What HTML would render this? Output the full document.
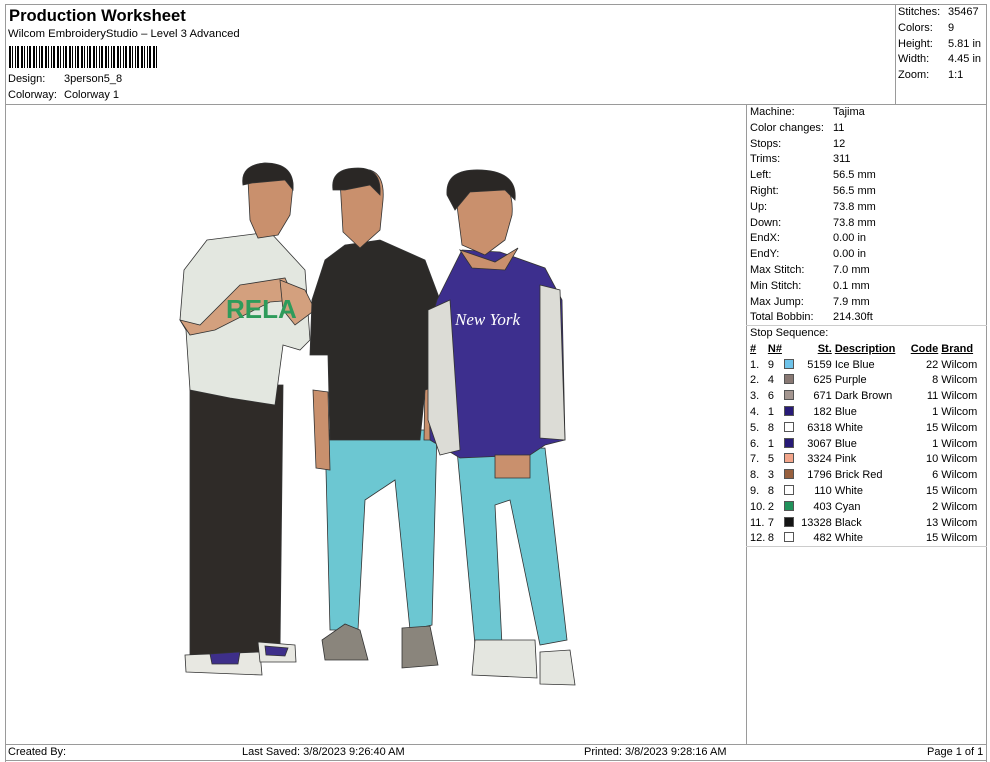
<!DOCTYPE html>
<html><head><meta charset="utf-8"><style>
*{margin:0;padding:0;box-sizing:border-box}
body{width:990px;height:762px;background:#fff;font-family:"Liberation Sans",Arial,sans-serif;font-size:11px;color:#000;position:relative;overflow:hidden}
.a{position:absolute;white-space:nowrap}
.ln{position:absolute;background:#9a9a9a}
.sw{display:inline-block;width:10px;height:10px;border:1px solid #555;vertical-align:-1px}
table{border-collapse:collapse;font-size:11px}
td{padding:0;height:15.8px;white-space:nowrap}
u{text-decoration:underline}
</style></head><body>
<div class="ln" style="left:5px;top:4px;width:982px;height:1px"></div>
<div class="ln" style="left:5px;top:4px;width:1px;height:758px"></div>
<div class="ln" style="left:986px;top:4px;width:1px;height:758px"></div>
<div class="ln" style="left:5px;top:104px;width:982px;height:1px"></div>
<div class="ln" style="left:895px;top:4px;width:1px;height:100px"></div>
<div class="ln" style="left:746px;top:104px;width:1px;height:640px"></div>
<div class="ln" style="left:5px;top:744px;width:982px;height:1px"></div>
<div class="ln" style="left:5px;top:760px;width:982px;height:1px"></div>
<div class="ln" style="left:746px;top:325px;width:241px;height:1px;background:#ccc"></div>
<div class="ln" style="left:746px;top:546px;width:241px;height:1px;background:#ccc"></div>

<div class="a" style="left:9px;top:6px;font-size:16.6px;font-weight:bold">Production Worksheet</div>
<div class="a" style="left:8px;top:28px;font-size:11.3px">Wilcom EmbroideryStudio – Level 3 Advanced</div>
<div class="a" style="left:9px;top:46px;width:148px;height:22px;background:repeating-linear-gradient(90deg,#000 0 2px,#fff 2px 3px,#000 3px 4px,#fff 4px 6px,#000 6px 7px,#fff 7px 8px,#000 8px 10px,#fff 10px 12px)"></div>
<div class="a" style="left:8px;top:73px">Design:</div><div class="a" style="left:64px;top:73px">3person5_8</div>
<div class="a" style="left:8px;top:89px">Colorway:</div><div class="a" style="left:64px;top:89px">Colorway 1</div>

<div class="a" style="left:898px;top:5px;line-height:15.8px">Stitches:<br>Colors:<br>Height:<br>Width:<br>Zoom:</div>
<div class="a" style="left:948px;top:5px;line-height:15.8px">35467<br>9<br>5.81 in<br>4.45 in<br>1:1</div>

<div class="a" style="left:750px;top:105px;line-height:15.8px">Machine:<br>Color changes:<br>Stops:<br>Trims:<br>Left:<br>Right:<br>Up:<br>Down:<br>EndX:<br>EndY:<br>Max Stitch:<br>Min Stitch:<br>Max Jump:<br>Total Bobbin:<br>Stop Sequence:</div>
<div class="a" style="left:833px;top:105px;line-height:15.8px">Tajima<br>11<br>12<br>311<br>56.5 mm<br>56.5 mm<br>73.8 mm<br>73.8 mm<br>0.00 in<br>0.00 in<br>7.0 mm<br>0.1 mm<br>7.9 mm<br>214.30ft</div>

<table class="a" style="left:750px;top:341px;width:234px">
<tr style="font-weight:bold"><td><u>#</u></td><td><u>N#</u></td><td></td><td style="text-align:right"><u>St.</u></td><td>&nbsp;<u>Description</u></td><td style="text-align:right"><u>Code</u></td><td>&nbsp;<u>Brand</u></td></tr>
<tr><td>1.</td><td>9</td><td><span class="sw" style="background:#6ec3ea"></span></td><td style="text-align:right">5159</td><td>&nbsp;Ice Blue</td><td style="text-align:right">22</td><td>&nbsp;Wilcom</td></tr>
<tr><td>2.</td><td>4</td><td><span class="sw" style="background:#887873"></span></td><td style="text-align:right">625</td><td>&nbsp;Purple</td><td style="text-align:right">8</td><td>&nbsp;Wilcom</td></tr>
<tr><td>3.</td><td>6</td><td><span class="sw" style="background:#a49690"></span></td><td style="text-align:right">671</td><td>&nbsp;Dark Brown</td><td style="text-align:right">11</td><td>&nbsp;Wilcom</td></tr>
<tr><td>4.</td><td>1</td><td><span class="sw" style="background:#271a77"></span></td><td style="text-align:right">182</td><td>&nbsp;Blue</td><td style="text-align:right">1</td><td>&nbsp;Wilcom</td></tr>
<tr><td>5.</td><td>8</td><td><span class="sw" style="background:#fff"></span></td><td style="text-align:right">6318</td><td>&nbsp;White</td><td style="text-align:right">15</td><td>&nbsp;Wilcom</td></tr>
<tr><td>6.</td><td>1</td><td><span class="sw" style="background:#271a77"></span></td><td style="text-align:right">3067</td><td>&nbsp;Blue</td><td style="text-align:right">1</td><td>&nbsp;Wilcom</td></tr>
<tr><td>7.</td><td>5</td><td><span class="sw" style="background:#f2a58a"></span></td><td style="text-align:right">3324</td><td>&nbsp;Pink</td><td style="text-align:right">10</td><td>&nbsp;Wilcom</td></tr>
<tr><td>8.</td><td>3</td><td><span class="sw" style="background:#98603e"></span></td><td style="text-align:right">1796</td><td>&nbsp;Brick Red</td><td style="text-align:right">6</td><td>&nbsp;Wilcom</td></tr>
<tr><td>9.</td><td>8</td><td><span class="sw" style="background:#fff"></span></td><td style="text-align:right">110</td><td>&nbsp;White</td><td style="text-align:right">15</td><td>&nbsp;Wilcom</td></tr>
<tr><td>10.</td><td>2</td><td><span class="sw" style="background:#21925b"></span></td><td style="text-align:right">403</td><td>&nbsp;Cyan</td><td style="text-align:right">2</td><td>&nbsp;Wilcom</td></tr>
<tr><td>11.</td><td>7</td><td><span class="sw" style="background:#141414"></span></td><td style="text-align:right">13328</td><td>&nbsp;Black</td><td style="text-align:right">13</td><td>&nbsp;Wilcom</td></tr>
<tr><td>12.</td><td>8</td><td><span class="sw" style="background:#fff"></span></td><td style="text-align:right">482</td><td>&nbsp;White</td><td style="text-align:right">15</td><td>&nbsp;Wilcom</td></tr>
</table>

<div class="a" style="left:8px;top:746px">Created By:</div>
<div class="a" style="left:242px;top:746px">Last Saved: 3/8/2023 9:26:40 AM</div>
<div class="a" style="left:584px;top:746px">Printed: 3/8/2023 9:28:16 AM</div>
<div class="a" style="left:927px;top:746px">Page 1 of 1</div>

<svg class="a" style="left:0;top:0" width="746" height="744" viewBox="0 0 746 744">
<g stroke="#333" stroke-width="0.8">
<path d="M190 385 L283 385 L280 650 L240 655 L190 660 Z" fill="#2f2b28"/>
<path d="M185 655 L260 652 L262 675 L186 672 Z" fill="#e8e8e2"/>
<path d="M210 654 L240 652 L238 664 L212 664Z" fill="#3e2f8a"/>
<path d="M258 642 L295 645 L296 662 L260 662 Z" fill="#e8e8e2"/>
<path d="M265 646 L288 648 L285 656 L266 655Z" fill="#3e2f8a"/>
<path d="M207 240 L270 232 L305 270 L310 340 L300 350 L283 345 L275 405 L230 398 L190 390 L186 330 L180 320 L184 270 Z" fill="#e3e7e0"/>
<path d="M180 320 L200 325 L240 285 L285 278 L295 300 L270 302 L215 330 L190 335 Z" fill="#d3a07e"/>
<path d="M280 280 L305 290 L315 310 L295 325 L283 310 Z" fill="#d3a07e"/>
<path d="M248 180 Q243 165 265 163 Q292 165 293 185 L290 215 L278 235 L258 238 L250 220 Z" fill="#c9906d"/>
<path d="M243 185 Q240 165 265 163 Q295 163 293 190 L285 180 L252 183 Z" fill="#2a2725"/>
<text x="226" y="318" font-family="Liberation Sans" font-weight="bold" font-size="26" fill="#2e9b5b" stroke="none">RELA</text>
<path d="M325 430 L437 430 L432 625 L410 630 L395 480 L365 500 L358 630 L330 630 Z" fill="#6cc7d2"/>
<path d="M322 640 L345 624 L360 630 L368 660 L325 660 Z" fill="#8a857c"/>
<path d="M402 628 L430 626 L438 665 L402 668 Z" fill="#8a857c"/>
<path d="M313 390 L328 392 L330 470 L316 468 Z" fill="#c9906d"/>
<path d="M425 380 L440 382 L438 440 L424 440 Z" fill="#c9906d"/>
<path d="M345 245 L380 240 L425 260 L440 300 L440 385 L425 390 L420 440 L330 440 L328 355 L310 355 L312 300 L325 260 Z" fill="#2c2a28"/>
<path d="M340 180 Q345 168 370 170 Q385 175 383 200 L380 230 L360 248 L343 232 Z" fill="#c9906d"/>
<path d="M333 190 Q330 168 358 168 Q382 168 380 195 L370 185 L345 190 Z" fill="#2a2725"/>
<path d="M457 450 L545 448 L567 640 L540 645 L510 500 L495 505 L502 645 L475 645 Z" fill="#6cc7d2"/>
<path d="M475 640 L535 640 L537 678 L472 675 Z" fill="#e4e6e0"/>
<path d="M540 652 L570 650 L575 685 L540 684 Z" fill="#e4e6e0"/>
<path d="M437 300 L462 250 L500 252 L545 268 L562 300 L565 440 L545 445 L530 455 L460 458 L430 440 L428 330 Z" fill="#3d2f8e"/>
<path d="M428 310 L450 300 L460 450 L440 455 L428 420 Z" fill="#dcdcd6"/>
<path d="M540 285 L560 290 L565 440 L540 438 Z" fill="#dcdcd6"/>
<path d="M460 250 L495 262 L518 248 L505 270 L472 268 Z" fill="#c9906d"/>
<path d="M455 190 Q455 175 485 175 Q515 180 512 215 L505 240 L485 255 L462 245 Z" fill="#c9906d"/>
<path d="M447 195 Q445 168 482 170 Q518 172 515 200 L505 190 L470 192 L455 210 Z" fill="#2a2725"/>
<path d="M495 455 L530 455 L530 478 L495 478Z" fill="#c9906d"/>
<text x="455" y="325" font-family="Liberation Serif" font-style="italic" font-size="17" fill="#fff" stroke="none">New York</text>
</g>
</svg>
</body></html>
